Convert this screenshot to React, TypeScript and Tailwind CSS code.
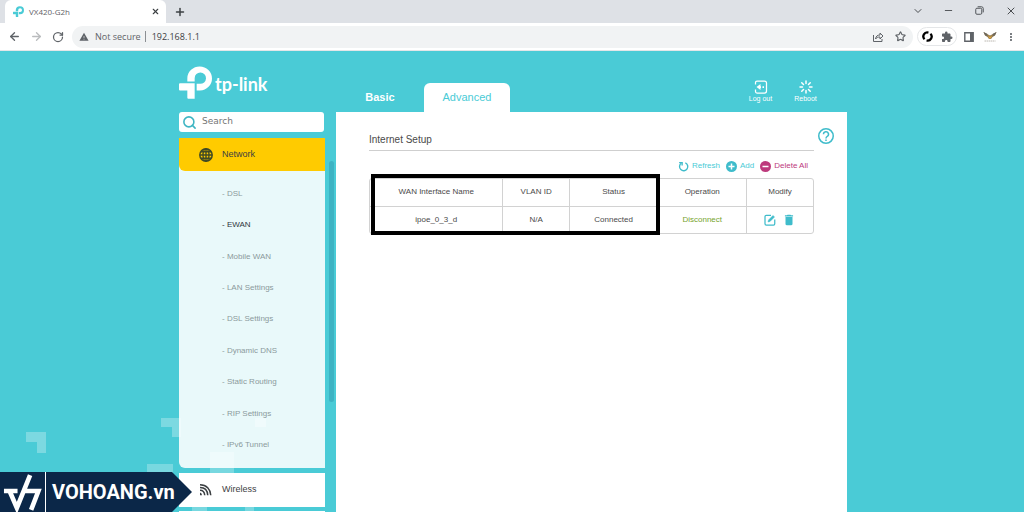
import { useState } from "react";
import type { ReactNode } from "react";
import { ArrowLeft, ArrowRight, ChevronDown, Minus, Plus, RotateCw, Search, Star, X } from "lucide-react";
import { MdDelete, MdExtension, MdMoreVert, MdWarning } from "react-icons/md";

const networkItems = [
  "DSL",
  "EWAN",
  "Mobile WAN",
  "LAN Settings",
  "DSL Settings",
  "Dynamic DNS",
  "Static Routing",
  "RIP Settings",
  "IPv6 Tunnel",
];

const TpMark = ({ className }: { className: string }) => (
  <svg viewBox="27 33 99 98" className={className} fill="currentColor" aria-hidden="true">
    <path d="M52 79V69a37 36 0 1 1 38 37H80V86h10a17 17 0 1 0-16-17v10z" />
    <path d="M30 84h44v47H55q-3 0-3-3v-22H30q-3 0-3-3V87q0-3 3-3z" />
  </svg>
);

const IconButton = ({ label, children, className = "" }: { label: string; children: ReactNode; className?: string }) => (
  <button type="button" aria-label={label} className={`flex shrink-0 items-center justify-center ${className}`}>
    {children}
  </button>
);

const BrowserChrome = () => (
  <header className="shrink-0 font-['Open_Sans',sans-serif] text-[#5f6368]">
    <div className="flex h-[23px] bg-[#dee1e6]">
      <div className="ml-[5px] flex w-[161px] items-center rounded-t-md bg-white pr-1.5 pl-2">
        <TpMark className="size-[11px] text-[#4acbd6]" />
        <span className="ml-[5px] text-[8px] leading-3">VX420-G2h</span>
        <IconButton label="Close tab" className="ml-auto size-[10px] text-[#3c4043]">
          <X size={9} strokeWidth={3} />
        </IconButton>
      </div>
      <IconButton label="New tab" className="ml-2 w-3 text-[#3c4043]">
        <Plus size={12} strokeWidth={3} />
      </IconButton>
      <div className="ml-auto flex gap-1 pb-0.5 text-[#4a4d51]">
        <IconButton label="Search tabs" className="w-[27px]">
          <ChevronDown size={12} />
        </IconButton>
        <IconButton label="Minimize" className="w-[27px]">
          <Minus size={11} />
        </IconButton>
        <IconButton label="Restore" className="w-[27px]">
          <svg viewBox="0 0 24 24" className="size-[9px]" fill="none" stroke="currentColor" strokeWidth="2.500">
            <rect x="2" y="6" width="16" height="16" rx="3" />
            <path d="M7 2h10q5 0 5 5v10" />
          </svg>
        </IconButton>
        <IconButton label="Close window" className="w-[27px]">
          <X size={12} strokeWidth={2} />
        </IconButton>
      </div>
    </div>
    <div className="flex h-7 items-center border-b border-[#e3e6e8] bg-white pr-[7px] pl-1">
      <IconButton label="Back" className="w-[21px]">
        <ArrowLeft size={13} strokeWidth={2.500} />
      </IconButton>
      <IconButton label="Forward" className="w-[22px] text-[#babcbe]">
        <ArrowRight size={13} strokeWidth={2.500} />
      </IconButton>
      <IconButton label="Reload" className="w-[21px]">
        <RotateCw size={12} strokeWidth={2.500} />
      </IconButton>
      <div className="ml-1 flex h-[22px] flex-1 items-center rounded-full bg-[#f1f3f4] px-[7px] text-[9px]">
        <MdWarning size={10} className="shrink-0" />
        <span className="ml-1.5 whitespace-nowrap">Not secure</span>
        <span className="mr-1.5 ml-1 h-[11px] w-px shrink-0 bg-[#8b8f93]" />
        <input
          aria-label="Address"
          defaultValue="192.168.1.1"
          className="min-w-0 flex-1 bg-transparent text-[#3c4043] outline-none"
        />
        <IconButton label="Share" className="mr-2.5 size-3">
          <svg viewBox="0 0 24 24" className="size-3" fill="none" stroke="currentColor" strokeWidth="2">
            <path d="M3 8v13h17v-5" />
            <path d="M7 16c1-6 4-8 9-8V4l6 6-6 6v-4c-4 0-7 1-9 4z" />
          </svg>
        </IconButton>
        <IconButton label="Bookmark" className="size-3">
          <Star size={11} strokeWidth={2.500} />
        </IconButton>
      </div>
      <div className="ml-1 flex h-[19px] w-10 items-center justify-between rounded-full border border-[#e4e6e8] px-[3px]">
        <IconButton label="Sync extension" className="size-3 text-black">
          <svg viewBox="0 0 24 24" className="size-[11px]" fill="none" stroke="currentColor" strokeWidth="5">
            <path d="M5.500 18A8.700 8.700 0 0 1 14 3.500M18.500 6A8.700 8.700 0 0 1 10 20.500" />
          </svg>
        </IconButton>
        <IconButton label="Extensions" className="size-3">
          <MdExtension size={12} />
        </IconButton>
      </div>
      <IconButton label="Side panel" className="ml-1.5 w-3">
        <svg viewBox="0 0 12 12" className="size-3">
          <path d="M1.800 1.800h8.400v8.400H1.800z" fill="none" stroke="currentColor" strokeWidth="1.400" />
          <path d="M7 2h3v8H7z" fill="currentColor" />
        </svg>
      </IconButton>
      <IconButton label="Profile" className="ml-2 w-[14px]">
        <svg viewBox="0 0 28 22" className="h-[11px] w-[14px]">
          <path d="M1 2l9 5 4 2 4-2 9-5-3 7-5 3-3 4h-4l-3-4-5-3z" fill="#8a7550" />
          <path d="M10 8l4 4 4-4-2 7h-4z" fill="#d9a441" />
          <path d="M1 2l8 4-2 4-3-2zM27 2l-8 4 2 4 3-2z" fill="#6b675c" />
          <path d="M3 20h22" stroke="#a5a298" strokeWidth="1.500" strokeDasharray="3 1" />
        </svg>
      </IconButton>
      <IconButton label="Menu" className="ml-2 w-3">
        <MdMoreVert size={14} />
      </IconButton>
    </div>
  </header>
);

const Backdrop = () => (
  <svg className="pointer-events-none absolute bottom-0 left-0 h-24 w-[340px]" viewBox="0 0 340 96" fill="#fff" aria-hidden="true">
    <path d="M26 16h20v21h-9V26H26z" opacity=".28" />
    <path d="M161 2h20v19h-9V11h-11z" opacity=".28" />
    <path d="M147 48h26v26h-26z" opacity=".26" />
    <path d="M210 36h24v36h-24z" opacity=".26" />
    <path d="M255 2h11v9h-11z" opacity=".3" />
    <path d="M192 91h15v5h-15zM245 91h9v5h-9z" opacity=".26" />
  </svg>
);

const Sidebar = () => {
  const [active, setActive] = useState("EWAN");

  return (
    <nav className="w-[146px] shrink-0">
      <label className="mr-px flex h-5 items-center rounded-[3px] bg-white px-[3px]">
        <Search size={15} strokeWidth={2.500} className="shrink-0 text-[#3fb5c3]" />
        <input
          type="search"
          aria-label="Search"
          placeholder="Search"
          className="ml-[5px] w-full min-w-0 bg-transparent font-['DejaVu_Sans',sans-serif] text-[9px] outline-none placeholder:text-[#757575]"
        />
      </label>
      <div className="mt-1.5 rounded-bl-md bg-white/88">
        <button type="button" className="flex h-[33px] w-full items-center rounded-bl-md bg-[#ffcb00] pl-5 text-[#3c4043]">
          <svg viewBox="0 0 28 28" className="size-[14px]" fill="none" stroke="#3f4a25" strokeWidth="2.800" aria-hidden="true">
            <circle cx="14" cy="14" r="12.400" strokeWidth="3" />
            <ellipse cx="14" cy="14" rx="6" ry="12" />
            <path d="M14 2v24M2 14h24M4 7.500h20M4 20.500h20" />
          </svg>
          <span className="ml-[9px] text-[9px]">Network</span>
        </button>
        <ul className="flex h-[297px] flex-col py-[7px] pl-[43px] text-[8px]">
          {networkItems.map((item) => (
            <li key={item} className="flex flex-1 items-center">
              <a
                href="#"
                onClick={() => setActive(item)}
                className={item === active ? "text-[#2f3640]" : "text-[#8b9a9c]"}
              >
                - {item}
              </a>
            </li>
          ))}
        </ul>
      </div>
      <button type="button" className="mt-[5px] flex h-[34px] w-full items-center bg-white pl-5 text-[#3c4043]">
        <svg viewBox="0 0 28 28" className="size-[14px]" fill="none" stroke="currentColor" strokeWidth="3" aria-hidden="true">
          <path d="M2 3.500c13 0 21 9 21.500 21M2 9c9 0 15 6 15.500 15.500M2 14.500c6 0 9 4 9.500 10" />
          <path d="M2 19q4 1 4 5.500H2z" fill="currentColor" stroke="none" />
        </svg>
        <span className="ml-[9px] text-[9px]">Wireless</span>
      </button>
      <div className="mt-1 h-[34px] bg-white" />
    </nav>
  );
};

const WanTable = () => (
  <div className="relative">
    <div className="overflow-hidden rounded-[3px] border border-[#d2d2d2]">
      <table className="w-full table-fixed text-center text-[8px] text-[#4a4a4a] [&_td+td]:border-l [&_th+th]:border-l [&_td]:border-[#d2d2d2] [&_th]:border-[#d2d2d2]">
        <colgroup>
          <col className="w-[30%]" />
          <col className="w-[15%]" />
          <col className="w-[20%]" />
          <col className="w-[20%]" />
          <col className="w-[15%]" />
        </colgroup>
        <thead>
          <tr className="h-[27px] border-b border-[#d2d2d2]">
            <th className="font-normal">WAN Interface Name</th>
            <th className="font-normal">VLAN ID</th>
            <th className="font-normal">Status</th>
            <th className="font-normal">Operation</th>
            <th className="font-normal">Modify</th>
          </tr>
        </thead>
        <tbody>
          <tr className="h-[27px]">
            <td>ipoe_0_3_d</td>
            <td>N/A</td>
            <td>Connected</td>
            <td>
              <button type="button" className="text-[#76a32c]">Disconnect</button>
            </td>
            <td>
              <div className="flex items-center justify-center gap-1.5 text-[#3fbccb]">
                <IconButton label="Edit">
                  <svg viewBox="0 0 24 24" className="size-3" fill="none" stroke="currentColor" strokeWidth="2.500">
                    <path d="M14 2.500H4.500Q2 2.500 2 5v14.500Q2 22 4.500 22H19q2.500 0 2.500-2.500V11" />
                    <path d="M9 12l9-9 3 3-9 9-4 1z" fill="currentColor" strokeWidth="1" />
                  </svg>
                </IconButton>
                <IconButton label="Delete">
                  <MdDelete size={14} />
                </IconButton>
              </div>
            </td>
          </tr>
        </tbody>
      </table>
    </div>
    {/* highlight frame around the interface, VLAN and status columns */}
    <div className="pointer-events-none absolute -top-1 -bottom-px left-0.5 w-[65%] border-4 border-black" />
  </div>
);

const Panel = () => (
  <section className="min-w-0 flex-1 bg-white pt-4 pl-[33px] text-[#4a4a4a]">
    <div className="grid grid-cols-[1fr_33px] gap-y-2">
      <h1 className="flex h-[23px] items-center border-b border-[#cfcfcf] text-[10px]">Internet Setup</h1>
      <IconButton label="Help" className="ml-1 size-4 text-[#3fbccb]">
        <svg viewBox="0 0 32 32" className="size-4" fill="none" stroke="currentColor" strokeWidth="3">
          <circle cx="16" cy="16" r="14.500" />
          <path d="M11 12.500a5 5 0 1 1 7.500 4.300Q16 18.200 16 21" strokeWidth="3" />
          <path d="M16 23v3" strokeWidth="3" />
        </svg>
      </IconButton>
      <div className="flex h-[19px] items-start justify-end gap-1.5 pt-px pr-1.5 text-[8px] leading-3 text-[#4acbd6]">
        <button type="button" className="flex items-center gap-[3px]">
          <svg viewBox="0 0 24 24" className="size-[11px]" fill="none" stroke="#3fbccb" strokeWidth="3" aria-hidden="true">
            <path d="M7 5a9 9 0 1 0 9-1" />
            <path d="M2.500 3.500H9V10" />
          </svg>
          Refresh
        </button>
        <button type="button" className="flex items-center gap-[3px]">
          <svg viewBox="0 0 22 22" className="size-[11px]" aria-hidden="true">
            <circle cx="11" cy="11" r="11" fill="#3fbccb" />
            <path d="M11 5v12M5 11h12" stroke="#fff" strokeWidth="3" />
          </svg>
          Add
        </button>
        <button type="button" className="flex items-center gap-[3px] text-[#bd3a7c]">
          <svg viewBox="0 0 22 22" className="size-[11px]" aria-hidden="true">
            <circle cx="11" cy="11" r="11" fill="currentColor" />
            <path d="M5 11h12" stroke="#fff" strokeWidth="3" />
          </svg>
          Delete All
        </button>
      </div>
      <div className="col-start-1 -mt-2">
        <WanTable />
      </div>
    </div>
  </section>
);

const TopBar = () => (
  <div className="flex h-[61px] items-end text-white">
    <div className="flex w-[157px] shrink-0 items-center pb-[13px]">
      <TpMark className="size-[33px]" />
      <span className="ml-[3px] pt-0.5 font-['Lato',sans-serif] text-[18px] leading-5 font-bold">tp-link</span>
    </div>
    <button type="button" className="h-[29px] w-[88px] text-[11px] font-bold">Basic</button>
    <button type="button" className="h-[29px] w-[86px] rounded-t-md bg-white text-[11px] text-[#4acbd6]">Advanced</button>
    <div className="mr-[19px] ml-auto flex pb-2 text-[7px] leading-[10px]">
      <button type="button" className="flex w-[45px] flex-col items-center">
        <svg viewBox="0 0 28 28" className="size-[14px]" fill="none" stroke="currentColor" strokeWidth="2.500" aria-hidden="true">
          <path d="M3 9V5q0-3 3-3h15q4 0 4 4v16q0 4-4 4H6q-3 0-3-3v-4" />
          <path d="M11 14h3m3 0h3" strokeWidth="3.500" />
          <path d="M5 14l8-6v12z" fill="currentColor" stroke="none" />
        </svg>
        Log out
      </button>
      <button type="button" className="flex w-[45px] flex-col items-center">
        <svg viewBox="0 0 28 28" className="size-[14px]" stroke="currentColor" strokeWidth="3" strokeLinecap="round" aria-hidden="true">
          <path d="M14 2v5M14 21v5M2 14h5M21 14h5M5.500 5.500l3.500 3.500M19 19l3.500 3.500M22.500 5.500L19 9M9 19l-3.500 3.500" />
        </svg>
        Reboot
      </button>
    </div>
  </div>
);

const Watermark = () => (
  <div className="fixed bottom-0 left-0 flex h-10 w-48 items-center bg-[#0b2748] text-white [clip-path:polygon(0_0,172px_0,100%_50%,172px_100%,0_100%)]">
    <svg viewBox="0 0 136 120" className="h-10 w-[45px] shrink-0" fill="none" stroke="currentColor" strokeWidth="14" aria-hidden="true">
      <path d="M91 9L51 108L29 57M12 57H53M72 57H116L94 114" />
    </svg>
    <span className="h-full w-px shrink-0 bg-white" />
    <span className="ml-1.5 font-['Roboto',sans-serif] text-[20px] leading-none font-bold">VOHOANG.vn</span>
  </div>
);

const App = () => (
  <div className="flex h-screen flex-col overflow-hidden font-['Liberation_Sans',Arial,sans-serif]">
    <BrowserChrome />
    <main className="relative min-h-0 flex-1 bg-[#4acbd6] pl-0.5">
      <Backdrop />
      <div className="relative mx-auto flex h-full max-w-[668px] flex-col">
        <TopBar />
        <div className="flex min-h-0 flex-1">
          <Sidebar />
          <div className="mx-1 mt-[49px] mr-0.5 h-[241px] w-[5px] shrink-0 rounded-full bg-[#3db3c3]" />
          <Panel />
        </div>
      </div>
    </main>
    <Watermark />
  </div>
);

export default App;
